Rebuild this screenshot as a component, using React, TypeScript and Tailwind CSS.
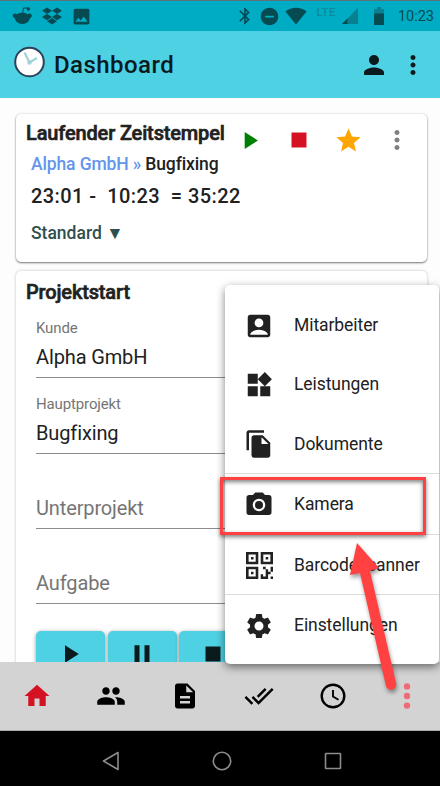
import type { ReactNode } from "react";
import {
  MdAccountBox,
  MdBluetooth,
  MdCameraAlt,
  MdDescription,
  MdDoNotDisturbOn,
  MdDoneAll,
  MdFileCopy,
  MdHome,
  MdImage,
  MdMoreVert,
  MdPause,
  MdPeople,
  MdPerson,
  MdPlayArrow,
  MdSettings,
  MdStar,
  MdStop,
  MdWidgets,
} from "react-icons/md";
import { FaDropbox } from "react-icons/fa";

const StatusBar = () => (
  <div className="flex h-[31px] shrink-0 items-center border-t border-[#5d7379] bg-[#00acc4] pl-[12px] pr-[6px] text-[#064a52]">
    <svg width="21" height="20" viewBox="0 0 21 20" fill="currentColor">
      <path d="M2.500 10h15.600c0 5-3.500 8-7.800 8s-7.800-3-7.800-8z" />
      <ellipse cx="10.300" cy="11.500" rx="7.600" ry="4.700" />
      <circle cx="3" cy="9.700" r="2.200" />
      <circle cx="17.600" cy="9.700" r="2.200" />
      <circle cx="16.300" cy="3" r="1.700" />
      <path d="M10.800 7l.6-5h4.500" fill="none" stroke="currentColor" strokeWidth="1" />
    </svg>
    <FaDropbox size={20} className="ml-[9px]" />
    <MdImage size={21} className="ml-[9px]" />
    <div className="ml-auto flex items-center">
      <MdBluetooth size={20} />
      <MdDoNotDisturbOn size={21} className="ml-[4px]" />
      <svg className="ml-[5px]" width="22" height="18" viewBox="0 0 22 18" fill="currentColor">
        <path d="M.5 4.500C6.500-.4 15.500-.4 21.500 4.500L11 17.500z" />
      </svg>
      <span className="mb-[7px] ml-[9px] text-[11.500px] font-medium leading-none tracking-[0.400px] text-[#0c8b9c]">
        LTE
      </span>
      <svg className="ml-[6px]" width="16" height="16" viewBox="0 0 16 16">
        <path d="M0 16L16 0v16z" fill="#07808f" />
        <path d="M0 16l5.500-5.500V16z" fill="#064a52" />
      </svg>
      <svg className="ml-[16px]" width="10" height="18" viewBox="0 0 10 18">
        <path d="M0 2h3V0h4v2h3v5H0z" fill="#07808f" />
        <path d="M0 6.500h10V18H0z" fill="#064a52" />
      </svg>
      <span className="ml-[14px] mt-[2px] text-[14.500px] leading-none">10:23</span>
    </div>
  </div>
);

const Header = () => (
  <header className="flex h-[67px] shrink-0 items-center bg-[#4fd1e4] pl-[14px] pr-3 text-[#0b1a1d]">
    <svg className="-mt-[6px]" width="32" height="32" viewBox="0 0 32 32" fill="none">
      <circle cx="15.500" cy="16" r="14.300" fill="#fff" stroke="#2d4059" strokeWidth="2" />
      <path d="M10.500 6.500l5 10 7.500-4.500" stroke="#9ed3d8" strokeWidth="2.200" />
      <circle cx="15.500" cy="16.500" r="2.200" fill="#9ed3d8" />
    </svg>
    <h1 className="ml-2 text-[24px] font-medium leading-none tracking-[0.450px]">Dashboard</h1>
    <MdPerson size={30} className="ml-auto mt-px" />
    <MdMoreVert size={30} className="ml-[9px] mt-px" />
  </header>
);

const CardTitle = ({ children }: { children: ReactNode }) => (
  <h2 className="w-[209px] whitespace-nowrap text-[20px] font-medium leading-none tracking-[-0.150px] [-webkit-text-stroke:0.6px_#212121]">
    {children}
  </h2>
);

const TimestampCard = () => (
  <section className="ml-4 mr-[13px] h-[148px] shrink-0 rounded-[5px] bg-white shadow-[0_1px_2px_rgba(0,0,0,0.5),0_0_3px_rgba(0,0,0,0.12)]">
    <div className="flex h-[38px] items-center pl-[10px]">
      <CardTitle>Laufender Zeitstempel</CardTitle>
      <div className="mt-[14px] flex items-center">
        <MdPlayArrow size={29} className="-ml-[0.500px] text-[#008000]" />
        <MdStop size={30} className="ml-[20px] text-[#d51224]" />
        <MdStar size={29} className="ml-[20px] text-[#ffa500]" />
        <MdMoreVert size={30} className="ml-[19.500px] text-[#808080]" />
      </div>
    </div>
    <p className="mt-[2px] pl-[15px] text-[17.500px] font-medium leading-[20px] tracking-[-0.130px]">
      <span className="text-[#6495ed]">Alpha GmbH »</span> Bugfixing
    </p>
    <p className="mt-[10px] whitespace-pre pl-[15px] text-[20px] font-medium leading-[24px] tracking-[0.420px]">
      {"23:01 -  10:23  = 35:22"}
    </p>
    <p className="mt-[15px] pl-[15px] text-[17.500px] font-medium leading-[20px] text-[#2f4f4f]">
      Standard ▼
    </p>
  </section>
);

const Field = ({ label, value }: { label: string; value?: string }) => (
  <div className="flex h-[75.300px] flex-col justify-end border-b border-[#8c8c8c] tracking-[-0.130px]">
    {value && <span className="mb-[8px] text-[15px] leading-[18px] text-[#757575]">{label}</span>}
    <span className={value ? "mb-[8px] text-[20px] leading-[24px]" : "mb-[8px] text-[20px] leading-[24px] text-[#757575]"}>
      {value || label}
    </span>
  </div>
);

const ActionButton = ({ children }: { children: ReactNode }) => (
  <button className="flex h-[46px] w-[69px] items-center justify-center rounded-[5px] bg-[#4fd1e4] pr-px text-[#0b1a1d] shadow-[0_1px_4px_rgba(0,0,0,0.4)]">
    {children}
  </button>
);

const ProjectCard = () => (
  <section className="ml-4 mr-[13px] mt-[9px] h-[460px] shrink-0 rounded-[5px] bg-white shadow-[0_0_3px_rgba(0,0,0,0.25)]">
    <div className="h-[32.100px] pl-[10px] pt-[11px]">
      <CardTitle>Projektstart</CardTitle>
    </div>
    <div className="px-5">
      <Field label="Kunde" value="Alpha GmbH" />
      <Field label="Hauptprojekt" value="Bugfixing" />
      <Field label="Unterprojekt" />
      <Field label="Aufgabe" />
      <div className="mt-[26.900px] flex gap-[2.500px]">
        <ActionButton>
          <MdPlayArrow size={30} />
        </ActionButton>
        <ActionButton>
          <MdPause size={30} />
        </ActionButton>
        <ActionButton>
          <MdStop size={30} />
        </ActionButton>
      </div>
    </div>
  </section>
);

const QrIcon = () => (
  <svg width="27" height="27" viewBox="0 0 27 27" fill="none" stroke="currentColor" strokeWidth="2.600">
    <path d="M1.300 1.300h9.700v9.700H1.300zM16 1.300h9.700v9.700H16zM1.300 16h9.700v9.700H1.300z" />
    <path
      d="M5 5h2.500v2.500H5zM19.700 5h2.500v2.500h-2.500zM5 19.700h2.500v2.500H5zM17 14.700h2.700v2.600H17zM19.700 17.300h2.400v7.300h-2.400zM24.600 14.700H27v5h-2.400zM22.100 19.700h2.500v2.500h-2.500zM14.700 22.200h2.400v2.400h5V27h-7.400zM24.600 24.600H27V27h-2.400z"
      fill="currentColor"
      stroke="none"
    />
  </svg>
);

const MenuItem = ({ icon, label }: { icon: ReactNode; label: string }) => (
  <div className="flex h-[59.400px] items-center">
    <span className="flex w-[69px] justify-center pr-px pt-[2px]">{icon}</span>
    <span className="pt-[2px] text-[17.500px] leading-none tracking-[-0.070px]">{label}</span>
  </div>
);

const Divider = () => <div className="h-px bg-[#dcdcdc]" />;

const OverflowMenu = () => (
  <div className="absolute left-[225px] top-[285px] h-[379px] w-[214px] rounded-[5px] bg-white pt-[10px] text-[#212121] shadow-[0_3px_8px_rgba(0,0,0,0.5)]">
    <MenuItem icon={<MdAccountBox size={30} />} label="Mitarbeiter" />
    <MenuItem icon={<MdWidgets size={30} />} label="Leistungen" />
    <MenuItem icon={<MdFileCopy size={30} />} label="Dokumente" />
    <Divider />
    <MenuItem icon={<MdCameraAlt size={30} />} label="Kamera" />
    <Divider />
    <MenuItem icon={<QrIcon />} label="Barcodescanner" />
    <Divider />
    <MenuItem icon={<MdSettings size={30} />} label="Einstellungen" />
  </div>
);

const BottomTabs = () => (
  <nav className="flex h-[69px] shrink-0 items-center justify-between border-b border-[#aaa] bg-[#d3d3d3] pl-[22px] pr-[18px]">
    <MdHome size={30} className="text-[#d51224]" />
    <MdPeople size={30} />
    <MdDescription size={30} />
    <MdDoneAll size={30} />
    <svg width="30" height="30" viewBox="0 0 30 30" fill="none" stroke="currentColor" strokeWidth="2.400">
      <circle cx="15" cy="15" r="11.300" />
      <path d="M15 9v6.500l5.500 3.300" strokeWidth="1.900" />
    </svg>
    <svg width="30" height="30" viewBox="0 0 30 30" fill="#ee6c75">
      <circle cx="15" cy="5.400" r="3.200" />
      <circle cx="15" cy="15" r="3.200" />
      <circle cx="15" cy="24.600" r="3.200" />
    </svg>
  </nav>
);

const AndroidNav = () => (
  <div className="flex h-[55px] shrink-0 items-center justify-between bg-black pl-[101px] pr-[97px] pt-[4px]">
    <svg width="20" height="20" viewBox="0 0 20 20" fill="none" stroke="#8c8c8c" strokeWidth="1.600">
      <path d="M17 1.500v17L2.500 10z" strokeLinejoin="round" />
    </svg>
    <svg width="20" height="20" viewBox="0 0 20 20" fill="none" stroke="#8c8c8c" strokeWidth="1.600">
      <circle cx="10" cy="10" r="8.700" />
    </svg>
    <svg width="20" height="20" viewBox="0 0 20 20" fill="none" stroke="#8c8c8c" strokeWidth="1.600">
      <rect x="2.500" y="2.500" width="15" height="15" rx="0.500" />
    </svg>
  </div>
);

const Annotation = () => (
  <>
    <div className="absolute left-[220px] top-[477px] h-[58px] w-[206px] border-[3px] border-[#ff4141] shadow-[0_2px_4px_rgba(0,0,0,0.5),inset_0_2px_4px_rgba(0,0,0,0.5)]" />
    <svg
      className="absolute left-[335px] top-[535px] drop-shadow-[1px_3px_2px_rgba(0,0,0,0.4)]"
      width="70"
      height="155"
      viewBox="0 0 70 155"
      fill="#ff4141"
    >
      <path d="M22 8L44 33L35 36L61 148A5 5 0 0 1 51 151L25 38L15 40z" />
    </svg>
  </>
);

const App = () => {
  return (
    <div className="relative flex h-[786px] w-[440px] flex-col overflow-hidden bg-[#fdfdfd] font-['Roboto',sans-serif] text-[#212121]">
      <StatusBar />
      <Header />
      <main className="flex h-[564px] shrink-0 flex-col overflow-hidden pt-4">
        <TimestampCard />
        <ProjectCard />
      </main>
      <div className="text-black">
        <BottomTabs />
        <AndroidNav />
      </div>
      <OverflowMenu />
      <Annotation />
    </div>
  );
};

export default App;
